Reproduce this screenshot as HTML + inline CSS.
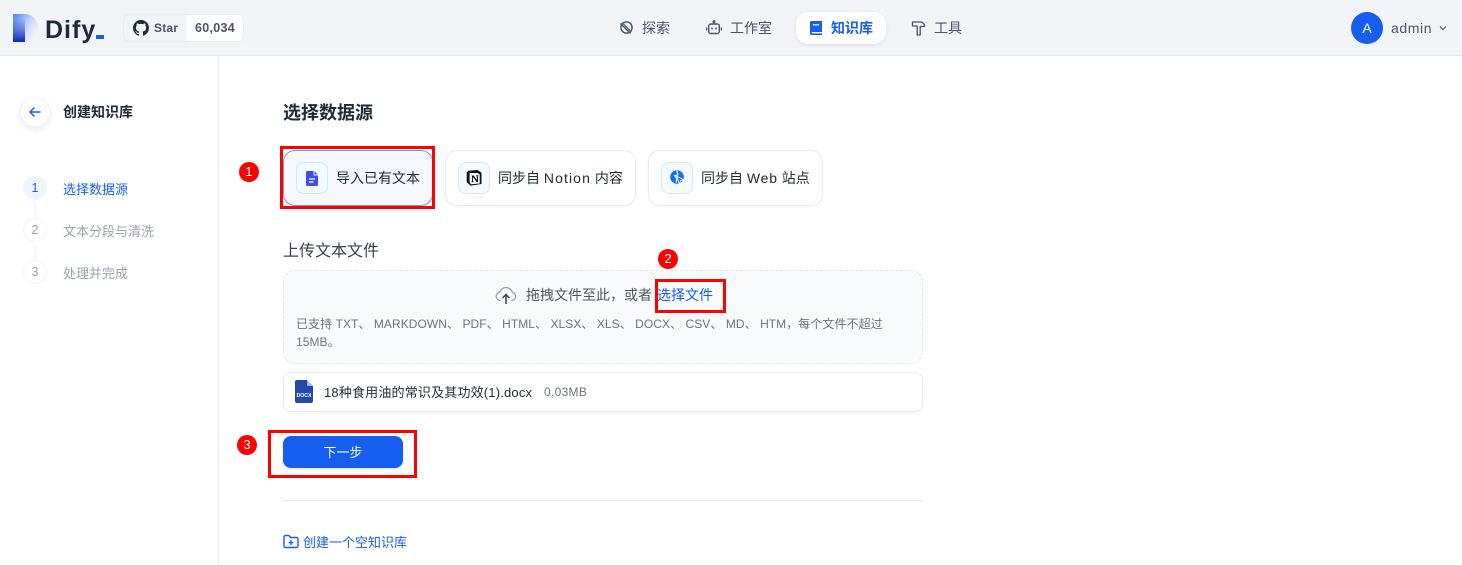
<!DOCTYPE html>
<html lang="zh-CN">
<head>
<meta charset="utf-8">
<title>Dify</title>
<style>
html,body{margin:0;padding:0;width:1462px;height:565px;overflow:hidden;background:#fff;}
body{position:relative;font-family:"Liberation Sans","Noto Sans CJK SC",sans-serif;color:#1f2a37;}
.a{position:absolute;box-sizing:border-box;white-space:nowrap;}
svg{display:block;overflow:visible;}
.t{line-height:20px;font-size:14px;}
.card{border:1px solid #eaecf0;border-radius:12px;background:#fff;height:56px;top:150px;box-shadow:0 1px 2px rgba(16,24,40,.05);}
.ic{width:32px;height:32px;top:162px;border:1px solid #d1e9ff;border-radius:8px;background:#f5faff;}
.red{border:3px solid #f00;}
.dot{width:20px;height:20px;border-radius:50%;background:#f00;color:#fff;font-size:13px;line-height:20px;text-align:center;}
.step{width:24px;height:24px;border-radius:50%;border:1px solid #f3f4f6;font-size:12.5px;line-height:22px;text-align:center;color:#9ca3af;background:#fff;}
.line{width:2px;height:14px;left:34px;background:#f3f4f6;}
.l{letter-spacing:1.1px;}
</style>
</head>
<body>
<!-- header -->
<div class="a" style="left:0;top:0;width:1462px;height:56px;background:#f2f4f7;border-bottom:1px solid #e5e7eb;"></div>
<svg class="a" style="left:13px;top:14px;" width="25" height="28" viewBox="0 0 25 28">
<defs>
<linearGradient id="g" x1="0" y1="0" x2="1" y2=".75"><stop offset="0" stop-color="#4f7ff0"/><stop offset=".55" stop-color="#c6d5fb"/><stop offset="1" stop-color="#f6f8fe"/></linearGradient>
<linearGradient id="h" x1="0" y1="0" x2="0" y2="1"><stop offset=".15" stop-color="#0a30c4" stop-opacity="0"/><stop offset="1" stop-color="#0428bd"/></linearGradient>
</defs>
<path d="M0 0H11C19 0 25 6 25 14C25 22 19 28 11 28H0Z" fill="url(#g)"/>
<path d="M0 0H12V28H0Z" fill="url(#h)"/>
</svg>
<div class="a" style="left:45px;top:14px;font-size:25px;line-height:32px;font-weight:700;color:#1f2a3d;letter-spacing:1px;">Dify</div>
<div class="a" style="left:96px;top:35px;width:8px;height:4px;background:#155eef;"></div>
<div class="a" style="left:123px;top:14px;width:121px;height:28px;border:1px solid #eaecf0;border-radius:6px;background:#f2f4f7;overflow:hidden;">
  <div class="a" style="left:63px;top:0;width:57px;height:26px;background:#fff;"></div>
</div>
<svg class="a" style="left:133px;top:20px;" width="16" height="16" viewBox="0 0 16 16"><path fill="#1f2a37" d="M8 0C3.58 0 0 3.58 0 8c0 3.54 2.29 6.53 5.47 7.59.4.07.55-.17.55-.38v-1.34c-2.23.48-2.7-1.07-2.7-1.07-.36-.92-.89-1.17-.89-1.17-.73-.5.05-.49.05-.49.8.06 1.23.83 1.23.83.72 1.22 1.87.87 2.33.66.07-.52.28-.87.51-1.07-1.78-.2-3.64-.89-3.64-3.95 0-.87.31-1.59.82-2.15-.08-.2-.36-1.02.08-2.12 0 0 .67-.21 2.2.82.64-.18 1.32-.27 2-.27s1.36.09 2 .27c1.53-1.04 2.2-.82 2.2-.82.44 1.1.16 1.92.08 2.12.51.56.82 1.27.82 2.15 0 3.07-1.87 3.75-3.65 3.95.29.25.54.73.54 1.48v2.2c0 .21.15.46.55.38A8 8 0 0 0 16 8c0-4.42-3.58-8-8-8z"/></svg>
<div class="a" style="left:154px;top:18px;font-size:12px;line-height:20px;font-weight:700;color:#4b5563;letter-spacing:.2px;">Star</div>
<div class="a" style="left:195px;top:18px;font-size:12.5px;line-height:20px;font-weight:700;color:#4b5563;letter-spacing:.3px;">60,034</div>

<svg class="a" style="left:619px;top:20px;" width="15" height="15" viewBox="0 0 15 15" fill="none" stroke="#4b5563" stroke-width="1.4"><circle cx="7.5" cy="7.5" r="5.6"/><path d="M1.5 3.5L11.5 13.5" stroke-width="1.5"/><path d="M3 2.5L12.5 12" stroke-width="1.5" stroke="#667085"/></svg>
<div class="a t" style="left:642px;top:18px;color:#4b5563;">探索</div>
<svg class="a" style="left:706px;top:20px;" width="16" height="16" viewBox="0 0 16 16" fill="none" stroke="#4b5563" stroke-width="1.4"><path d="M8 1.5V4"/><circle cx="8" cy="1.6" r=".8" fill="#4b5563"/><rect x="2.7" y="4" width="10.6" height="9.5" rx="2"/><path d="M.6 7.5V10.5M15.4 7.5V10.5"/><path d="M6 7.6V9.4M10 7.6V9.4" stroke-width="1.6"/></svg>
<div class="a t" style="left:730px;top:18px;color:#4b5563;">工作室</div>
<div class="a" style="left:796px;top:12px;width:90px;height:32px;border-radius:12px;background:#fff;box-shadow:0 1px 3px rgba(16,24,40,.1);"></div>
<svg class="a" style="left:810px;top:21px;" width="12" height="14" viewBox="0 0 12 14"><path fill="#155eef" d="M1.6 0H12V11H2A1 1 0 0 0 2 12.4H12V14H1.6A1.6 1.6 0 0 1 0 12.4V1.6A1.6 1.6 0 0 1 1.6 0Z"/><rect x="3" y="3.2" width="6" height="1.2" fill="#fff"/></svg>
<div class="a t" style="left:831px;top:18px;color:#155eef;font-weight:700;">知识库</div>
<svg class="a" style="left:911px;top:21px;" width="15" height="15" viewBox="0 0 15 15" fill="none" stroke="#4b5563" stroke-width="1.3"><path d="M1.5 1H10.5L13.5 3.5V5.5H9.2V14H6.2V5H1.5Z" stroke-linejoin="round"/></svg>
<div class="a t" style="left:934px;top:18px;color:#4b5563;">工具</div>

<div class="a" style="left:1351px;top:12px;width:32px;height:32px;border-radius:50%;background:#155eef;color:#fff;font-size:14px;line-height:32px;text-align:center;">A</div>
<div class="a t" style="left:1391px;top:18px;color:#4b5563;letter-spacing:.6px;">admin</div>
<svg class="a" style="left:1439px;top:25px;" width="8" height="6" viewBox="0 0 8 6" fill="none" stroke="#4b5563" stroke-width="1.1"><path d="M1 1.5L4 4.5L7 1.5"/></svg>

<!-- sidebar -->
<div class="a" style="left:218px;top:56px;width:1px;height:509px;background:#eaecf0;"></div>
<div class="a" style="left:20px;top:97px;width:30px;height:30px;border-radius:50%;background:#fff;border:1px solid #f3f4f6;box-shadow:0 3px 8px rgba(16,24,40,.09);"></div>
<svg class="a" style="left:29px;top:106px;" width="12" height="12" viewBox="0 0 12 12" fill="none" stroke="#155eef" stroke-width="1.5" stroke-linecap="round" stroke-linejoin="round"><path d="M11 6H1M5 2L1 6L5 10"/></svg>
<div class="a" style="left:63px;top:102px;font-size:14px;line-height:20px;font-weight:700;color:#1f2a37;">创建知识库</div>

<div class="a step" style="left:23px;top:176px;background:#eff4ff;border-color:#eff4ff;color:#155eef;">1</div>
<div class="a" style="left:63px;top:180px;font-size:13px;line-height:20px;color:#155eef;">选择数据源</div>
<div class="a line" style="top:203px;"></div>
<div class="a step" style="left:23px;top:218px;">2</div>
<div class="a" style="left:63px;top:222px;font-size:13px;line-height:20px;color:#9ca3af;">文本分段与清洗</div>
<div class="a line" style="top:245px;"></div>
<div class="a step" style="left:23px;top:260px;">3</div>
<div class="a" style="left:63px;top:264px;font-size:13px;line-height:20px;color:#9ca3af;">处理并完成</div>

<!-- main -->
<div class="a" style="left:283px;top:101px;font-size:18px;line-height:24px;font-weight:700;color:#1f2a37;">选择数据源</div>

<div class="a card" style="left:283px;width:150px;background:#f5f8ff;border-color:#6c9bf6;"></div>
<div class="a ic" style="left:296px;"></div>
<svg class="a" style="left:306px;top:171px;" width="12" height="15" viewBox="0 0 12 15"><path fill="#444ce7" d="M1.5 0H7.5V4.5H12V13.5A1.5 1.5 0 0 1 10.5 15H1.5A1.5 1.5 0 0 1 0 13.5V1.5A1.5 1.5 0 0 1 1.5 0ZM8.5 0.3L11.7 3.5H8.5Z"/><path d="M3 8H9M3 11H7.5" stroke="#fff" stroke-width="1.3"/></svg>
<div class="a t" style="left:336px;top:168px;font-size:14px;color:#1f2a37;">导入已有文本</div>

<div class="a card" style="left:445px;width:191px;"></div>
<div class="a ic" style="left:458px;"></div>
<svg class="a" style="left:466px;top:170px;" width="16" height="16" viewBox="0 0 16 16"><path d="M2.5 .7L11.5 0L15.5 2.8V14L4.5 15.6L.7 12V2.2Z" fill="#111" /><path d="M3.6 3H11.4L13.7 4.4V13.5L5 14.2L3.6 12.4Z" fill="#fff"/><path d="M5.6 5.5H7.8L10.8 10V6.3L10 6V5.4H12.6V6L12 6.3V12.3H10.8L6.9 7V11.2L7.8 11.6V12.2H5.4V11.6L6 11.2V6.1L5.6 6Z" fill="#111"/></svg>
<div class="a t" style="left:498px;top:168px;">同步自 <span class="l">Notion</span> 内容</div>

<div class="a card" style="left:648px;width:175px;"></div>
<div class="a ic" style="left:661px;"></div>
<svg class="a" style="left:670px;top:169px;" width="14" height="17" viewBox="0 0 14 17"><circle cx="7" cy="8" r="6.8" fill="#1570ef"/><path d="M7.2 1.5C6 3.5 9 4.5 7.6 6L4.7 6.7L6.8 9.5L6.2 13.5" stroke="#f5faff" stroke-width="1.2" fill="none"/><path d="M6.8 7L13.5 10.8L10.5 12L9.2 15.2Z" fill="#1570ef" stroke="#f5faff" stroke-width=".9"/></svg>
<div class="a t" style="left:701px;top:168px;">同步自 <span style="letter-spacing:.8px;">Web</span> 站点</div>

<div class="a" style="left:283px;top:242px;font-size:16px;line-height:20px;color:#374151;">上传文本文件</div>

<div class="a" style="left:283px;top:270px;width:640px;height:94px;background:#f9fafb;border:1px dashed #e5e7eb;border-radius:12px;"></div>
<svg class="a" style="left:495px;top:285px;" width="22" height="20" viewBox="0 0 22 20" fill="none"><path d="M5.5 15.5H5A4.2 4.2 0 0 1 4.7 7.2A6.5 6.5 0 0 1 17.2 7.2A4.2 4.2 0 0 1 17 15.5H16.5" stroke="#98a2b3" stroke-width="1.3"/><path d="M11 19V10M7.5 13L11 9.5L14.5 13" stroke="#374151" stroke-width="1.5"/></svg>
<div class="a" style="left:526px;top:285px;font-size:14px;line-height:20px;color:#4b5563;">拖拽文件至此，或者</div>
<div class="a" style="left:657px;top:285px;font-size:14px;line-height:20px;color:#155eef;">选择文件</div>
<div class="a" style="left:296px;top:315px;font-size:12px;line-height:18px;color:#6b7280;letter-spacing:.06px;">已支持 TXT、 MARKDOWN、 PDF、 HTML、 XLSX、 XLS、 DOCX、 CSV、 MD、 HTM，每个文件不超过<br>15MB。</div>

<div class="a" style="left:283px;top:372px;width:640px;height:40px;border:1px solid #eaecf0;border-radius:8px;background:#fff;box-shadow:0 1px 2px rgba(16,24,40,.05);"></div>
<svg class="a" style="left:295px;top:380px;" width="18" height="23" viewBox="0 0 18 23"><path fill="#2548ab" d="M2 0H12L18 6V21A2 2 0 0 1 16 23H2A2 2 0 0 1 0 21V2A2 2 0 0 1 2 0Z"/><path fill="#a8b8e2" d="M12 0L18 6H13A1 1 0 0 1 12 5Z"/><text x="9" y="17" font-family="Liberation Sans" font-size="5.2" font-weight="700" fill="#fff" text-anchor="middle">DOCX</text></svg>
<div class="a" style="left:324px;top:383px;font-size:13px;line-height:20px;color:#1f2a37;letter-spacing:.18px;">18种食用油的常识及其功效(1).docx</div>
<div class="a" style="left:544px;top:382px;font-size:12px;line-height:20px;color:#6b7280;letter-spacing:.3px;">0.03MB</div>

<div class="a" style="left:283px;top:436px;width:120px;height:32px;border-radius:8px;background:#155eef;color:#fff;font-size:13px;line-height:33px;text-align:center;box-shadow:0 1px 2px rgba(16,24,40,.15);">下一步</div>

<div class="a" style="left:283px;top:500px;width:640px;height:1px;background:#eaecf0;"></div>
<svg class="a" style="left:283px;top:534px;" width="16" height="15" viewBox="0 0 16 15" fill="none" stroke="#155eef" stroke-width="1.4"><path d="M1 3A1.5 1.5 0 0 1 2.5 1.5H6L7.5 3.5H13.5A1.5 1.5 0 0 1 15 5V12A1.5 1.5 0 0 1 13.5 13.5H2.5A1.5 1.5 0 0 1 1 12Z"/><path d="M8 6.2V11M5.6 8.6H10.4"/></svg>
<div class="a" style="left:303px;top:533px;font-size:13px;line-height:20px;color:#155eef;">创建一个空知识库</div>

<!-- annotations -->
<div class="a red" style="left:280px;top:146px;width:155px;height:63px;"></div>
<div class="a dot" style="left:239px;top:162px;">1</div>
<div class="a red" style="left:655px;top:279px;width:71px;height:34px;"></div>
<div class="a dot" style="left:658px;top:249px;">2</div>
<div class="a red" style="left:268px;top:430px;width:149px;height:48px;"></div>
<div class="a dot" style="left:237px;top:435px;">3</div>
</body>
</html>
